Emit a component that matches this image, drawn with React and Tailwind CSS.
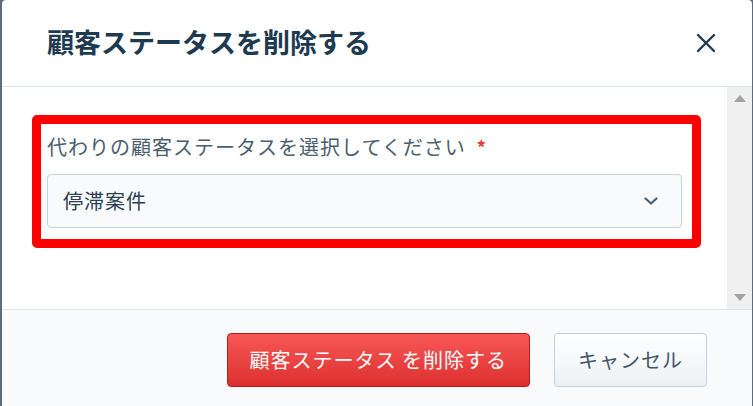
import React from 'react';

const font = { fontFamily: '"Noto Sans CJK JP", "Noto Sans", sans-serif' };

const App = () => {
  return (
    <div className="w-[753px] h-[406px] bg-[#5c6c7c] overflow-hidden" style={font}>
      <div className="ml-[2px] w-[750px] h-[406px] bg-white rounded-t-[4px] flex flex-col overflow-hidden">
        {/* Header */}
        <div className="h-[87px] shrink-0 flex items-center justify-between pl-[45px] pr-[36px] border-b border-[#dde5ec]">
          <h2 className="text-[27px] font-bold text-[#1e3a50] leading-none pb-[3px]">顧客ステータスを削除する</h2>
          <button className="w-[20px] h-[20px] text-[#1e3a50]">
            <svg viewBox="0 0 20 20" width="20" height="20" fill="none" stroke="currentColor" strokeWidth="2.4" strokeLinecap="round">
              <path d="M2 2 L18 18 M18 2 L2 18" />
            </svg>
          </button>
        </div>

        {/* Body */}
        <div className="h-[222px] shrink-0 flex">
          <div className="flex-1 pl-[45px] pr-[45px] pt-[46px]">
            <div className="relative">
              <label className="block text-[20px] leading-[28px] tracking-[1px] text-[#4b5e70]">
                代わりの顧客ステータスを選択してください
                <span className="text-[#e53935] ml-[11px] text-[18px] font-bold">*</span>
              </label>
              <div className="mt-[13px] h-[54px] rounded-[4px] border border-[#c6d2dc] bg-[#f8fafc] flex items-center justify-between pl-[15px] pr-[23px]">
                <span className="text-[20px] tracking-[1px] text-[#2d3e50]">停滞案件</span>
                <svg viewBox="0 0 14 8" width="14" height="8" fill="none" stroke="#4a6278" strokeWidth="2.2" strokeLinecap="round" strokeLinejoin="round">
                  <path d="M1.5 1.5 L7 6.5 L12.5 1.5" />
                </svg>
              </div>
              {/* annotation box */}
              <div className="absolute left-[-15px] right-[-19px] top-[-18px] bottom-[-20px] border-[9px] border-[#ff0000] rounded-[5px] pointer-events-none" />
            </div>
          </div>
          {/* Scrollbar */}
          <div className="w-[25px] bg-[#f0f0f0] flex flex-col items-center justify-between py-[8px]">
            <svg width="12" height="7" viewBox="0 0 12 7"><path d="M6 0 L12 7 L0 7 Z" fill="#a3a3a3" /></svg>
            <svg width="12" height="7" viewBox="0 0 12 7"><path d="M0 0 L12 0 L6 7 Z" fill="#a3a3a3" /></svg>
          </div>
        </div>

        {/* Footer */}
        <div className="flex-1 border-t border-[#dde5ec] bg-[#f8fafc] flex justify-end items-start gap-[24px] pt-[23px] pr-[45px]">
          <button className="h-[54px] px-[22px] rounded-[4px] border border-[#b91c1c] bg-gradient-to-b from-[#f85656] to-[#dc2f2f] text-white text-[20px] tracking-[1px]">
            顧客ステータス を削除する
          </button>
          <button className="h-[54px] w-[153px] rounded-[4px] border border-[#c5d0da] bg-gradient-to-b from-white to-[#edf1f4] text-[#40566b] text-[20px] tracking-[1px]">
            キャンセル
          </button>
        </div>
      </div>
    </div>
  );
};

export default App;
